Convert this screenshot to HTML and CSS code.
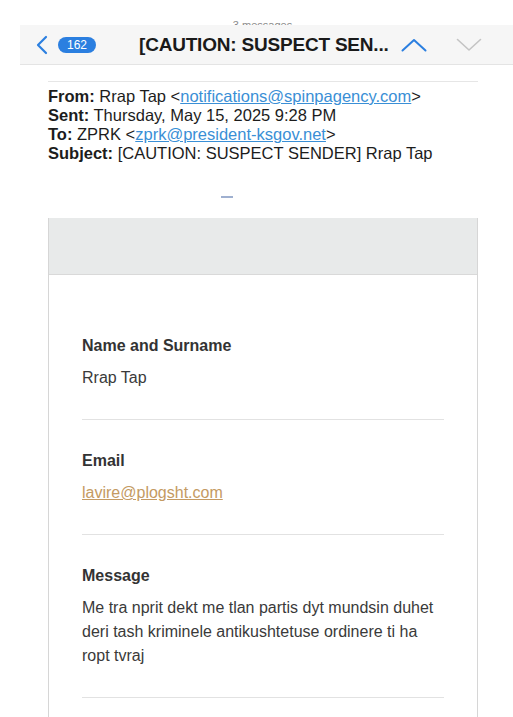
FILE: index.html
```html
<!DOCTYPE html>
<html lang="en">
<head>
    <meta charset="UTF-8">
    <meta name="viewport" content="width=device-width, initial-scale=1.0">
    <title>[CAUTION: SUSPECT SENDER] Rrap Tap</title>
    <link rel="stylesheet" href="styles.css">
</head>
<body>
    <div class="top"><span>3 messages</span></div>
    <div class="nav">
        <svg class="back" width="12" height="20" viewBox="0 0 12 20"><path d="M10 2 L2 10 L10 18" fill="none" stroke="#2b7fe0" stroke-width="2.2" stroke-linecap="round" stroke-linejoin="round"/></svg>
        <span class="badge">162</span>
        <span class="title">[CAUTION: SUSPECT SEN...</span>
        <svg class="arrow up" width="26" height="14" viewBox="0 0 26 14"><path d="M1.5 12.5 L13 2 L24.5 12.5" fill="none" stroke="#2b7fe0" stroke-width="2" stroke-linecap="round" stroke-linejoin="round"/></svg>
        <svg class="arrow down" width="26" height="14" viewBox="0 0 26 14"><path d="M1.5 1.5 L13 12 L24.5 1.5" fill="none" stroke="#c4c4c4" stroke-width="1.6" stroke-linecap="round" stroke-linejoin="round"/></svg>
    </div>

    <div class="headers">
        <div><b>From:</b> Rrap Tap &lt;<a href="#">notifications@spinpagency.com</a>&gt;</div>
        <div><b>Sent:</b> Thursday, May 15, 2025 9:28 PM</div>
        <div><b>To:</b> ZPRK &lt;<a href="#">zprk@president-ksgov.net</a>&gt;</div>
        <div><b>Subject:</b> [CAUTION: SUSPECT SENDER] Rrap Tap</div>
    </div>

    <div class="dash"></div>

    <div class="card">
        <div class="band"></div>
        <div class="fields">
            <div class="field">
                <div class="label">Name and Surname</div>
                <div class="value">Rrap Tap</div>
            </div>
            <div class="field">
                <div class="label">Email</div>
                <div class="value"><a href="#">lavire@plogsht.com</a></div>
            </div>
            <div class="field">
                <div class="label">Message</div>
                <div class="value">Me tra nprit dekt me tlan partis dyt mundsin duhet deri tash kriminele antikushtetuse ordinere ti ha ropt tvraj</div>
            </div>
        </div>
    </div>
</body>
</html>
```

FILE: styles.css
```css
body {
    margin: 0;
    background: #fff;
    font-family: "Liberation Sans", Arial, sans-serif;
    color: #1c1c1c;
    overflow: hidden;
}
.top {
    height: 25px;
    display: flex;
    justify-content: center;
    align-items: flex-end;
    overflow: hidden;
}
.top span {
    font-size: 11px;
    line-height: 11px;
    margin-bottom: -6px;
    color: #8a8a8a;
    padding-left: 12px;
}
.nav {
    margin-left: 20px;
    height: 39px;
    background: #f6f6f6;
    border-bottom: 1px solid #e4e4e4;
    display: flex;
    align-items: center;
}
.back {
    margin-left: 16px;
}
.badge {
    margin-left: 10px;
    width: 38px;
    height: 16px;
    line-height: 16px;
    border-radius: 8px;
    background: #2b7fe0;
    color: #fff;
    font-size: 12px;
    text-align: center;
}
.title {
    margin-left: 43px;
    font-size: 19px;
    font-weight: bold;
    letter-spacing: -0.2px;
    color: #1a1a1a;
}
.arrow.up {
    margin-left: 12px;
}
.arrow.down {
    margin-left: 29px;
}
.headers {
    margin: 16px 35px 0 48px;
    border-top: 1px solid #e6e6e6;
    padding-top: 5px;
    font-size: 16.5px;
    line-height: 19px;
    color: #1c1c1c;
}
.headers a {
    color: #3a8fd6;
}
.dash {
    width: 12px;
    height: 2px;
    background: #9fb0d0;
    margin: 33px 0 0 221px;
}
.card {
    margin: 20px 35px 0 48px;
    border: 1px solid #d6d6d6;
    border-top: none;
}
.band {
    height: 56px;
    background: #e8eaea;
    border-bottom: 1px solid #d9d9d9;
}
.fields {
    padding: 62px 33px 0;
}
.field {
    border-bottom: 1px solid #e2e2e2;
    padding-bottom: 29px;
    margin-bottom: 32px;
}
.label {
    font-size: 16px;
    font-weight: bold;
    color: #333;
    line-height: 18px;
}
.value {
    margin-top: 11px;
    font-size: 16px;
    line-height: 24px;
    color: #3a3a3a;
}
.value a {
    color: #c49a62;
}
```
